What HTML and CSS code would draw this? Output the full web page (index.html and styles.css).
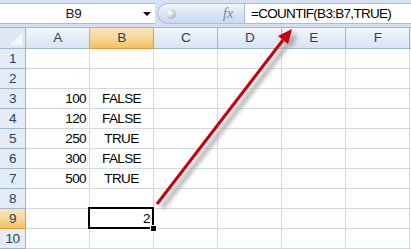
FILE: index.html
```html
<!DOCTYPE html>
<html lang="en">
<head>
  <meta charset="UTF-8">
  <title>COUNTIF</title>
  <link rel="stylesheet" href="styles.css">
</head>
<body>

  <div class="formula-bar">
    <div class="name-box">
      <span class="name">B9</span>
      <span class="drop"></span>
    </div>
    <div class="grip">
      <span class="ball"></span>
      <span class="fx">fx</span>
    </div>
    <div class="formula">=COUNTIF(B3:B7,TRUE)</div>
  </div>

  <div class="sheet" id="sheet"></div>

  <!-- arrow pointing at the formula -->
  <svg class="arrow" width="411" height="249" viewBox="0 0 411 249">
    <defs>
      <filter id="soft" x="-20%" y="-20%" width="140%" height="140%">
        <feGaussianBlur stdDeviation="2"/>
      </filter>
    </defs>
    <g class="shadow" filter="url(#soft)" transform="translate(5 4)">
      <line x1="157" y1="204" x2="283" y2="40"/>
      <polygon points="292,29 288,44 278,36"/>
    </g>
    <g class="red">
      <line x1="157" y1="204" x2="283" y2="40"/>
      <polygon points="292,29 288,44 278,36"/>
    </g>
  </svg>

  <script>
    // columns and data
    let cols = ["A", "B", "C", "D", "E", "F"];
    let data = {
      3: ["100", "FALSE"],
      4: ["120", "FALSE"],
      5: ["250", "TRUE"],
      6: ["300", "FALSE"],
      7: ["500", "TRUE"]
    };

    let html = '<div class="corner"></div>';
    for (let c of cols) {
      html += `<div class="col${c === "B" ? " sel" : ""}">${c}</div>`;
    }
    html += '<div class="col edge"></div>';

    for (let r = 1; r <= 10; r++) {
      html += `<div class="row${r === 9 ? " sel" : ""}">${r}</div>`;
      for (let i = 0; i < cols.length; i++) {
        let text = "";
        let cls = "cell";
        if (data[r] && i === 0) { text = data[r][0]; cls += " num"; }
        if (data[r] && i === 1) { text = data[r][1]; cls += " bool"; }
        if (r === 9 && i === 1) { text = "2"; cls += " num active"; }
        html += `<div class="${cls}">${text}</div>`;
      }
      html += '<div class="cell edge"></div>';
    }
    document.getElementById("sheet").innerHTML = html;
  </script>
</body>
</html>
```

FILE: styles.css
```css
body {
  margin: 0;
  width: 411px;
  height: 249px;
  overflow: hidden;
  background: #fff;
  font-family: "Liberation Sans", Arial, sans-serif;
  position: relative;
}

/* formula bar */
.formula-bar {
  display: flex;
  height: 28px;
  box-sizing: border-box;
  padding-top: 3px;
  padding-bottom: 3px;
  background: #d5e1f2;
  border-bottom: 1px solid #9eb6ce;
}

.name-box {
  flex-shrink: 0;
  width: 155px;
  display: flex;
  align-items: center;
  background: #fff;
  border-top: 1px solid #a7bcd8;
  border-bottom: 1px solid #a7bcd8;
  box-sizing: border-box;
}

.name {
  flex: 1;
  text-align: center;
  font-size: 13.5px;
  letter-spacing: -0.3px;
  color: #1a1a1a;
  padding-left: 4px;
}

.drop {
  width: 0;
  height: 0;
  margin-right: 4px;
  border-left: 4px solid transparent;
  border-right: 4px solid transparent;
  border-top: 4px solid #000;
}

.grip {
  flex-shrink: 0;
  width: 87px;
  display: flex;
  align-items: center;
  border-radius: 11px 0 0 11px;
  margin-left: 2px;
  background: linear-gradient(#f1f6fc, #d9e5f4 50%, #c9d9ee);
  border: 1px solid #a9bfdc;
  border-right: none;
  box-sizing: border-box;
}

.ball {
  width: 10px;
  height: 10px;
  margin-left: 8px;
  border-radius: 50%;
  background: radial-gradient(circle at 35% 35%, #ffffff, #c2c7ce 60%, #9ca4ae);
}

.fx {
  margin-left: 47px;
  font-family: "Liberation Serif", serif;
  font-style: italic;
  font-size: 14px;
  color: #7a8595;
}

.formula {
  flex: 1;
  min-width: 0;
  overflow: hidden;
  white-space: nowrap;
  background: #fff;
  border: 1px solid #a7bcd8;
  border-right: none;
  box-sizing: border-box;
  font-size: 13.5px;
  letter-spacing: -0.7px;
  line-height: 19px;
  padding-left: 6px;
  color: #000;
}

/* sheet grid */
.sheet {
  display: grid;
  grid-template-columns: 26px repeat(6, 64px) 1fr;
  grid-template-rows: 21px repeat(10, 20px);
  font-size: 13.5px;
  letter-spacing: -0.6px;
}

.sheet > div {
  box-sizing: border-box;
  border-right: 1px solid #d0d7e5;
  border-bottom: 1px solid #d0d7e5;
  line-height: 20px;
  white-space: nowrap;
}

.corner {
  background: #dfe8f5;
  border-right: 1px solid #9eb6ce !important;
  border-bottom: 1px solid #9eb6ce !important;
  position: relative;
}

.corner::after {
  content: "";
  position: absolute;
  right: 3px;
  bottom: 3px;
  border-left: 12px solid transparent;
  border-bottom: 12px solid #f4f7fb;
}

.col {
  text-align: center;
  color: #27415f;
  background: linear-gradient(#f3f7fc, #e4ecf7 50%, #dae4f2);
  border-right: 1px solid #9eb6ce !important;
  border-bottom: 1px solid #9eb6ce !important;
}

.row {
  text-align: center;
  color: #27415f;
  background: #e4ecf7;
  border-right: 1px solid #9eb6ce !important;
  border-bottom: 1px solid #9eb6ce !important;
}

.col.sel {
  background: linear-gradient(#fbe3b8, #f8d79b 50%, #f1c15f);
  border-right: 1px solid #f29536 !important;
  border-bottom: 1px solid #f29536 !important;
}

.row.sel {
  background: linear-gradient(#fbe3b8, #f8d79b 50%, #f1c15f);
  border-right: 1px solid #f29536 !important;
  border-bottom: 1px solid #f29536 !important;
}

.edge {
  border-right: none !important;
}

.num {
  text-align: right;
  padding-right: 3px;
}

.bool {
  text-align: center;
}

.active {
  position: relative;
}

.active::after {
  content: "";
  position: absolute;
  top: -2px;
  left: -2px;
  right: -1px;
  bottom: -1px;
  border: 2px solid #000;
}

.active::before {
  content: "";
  position: absolute;
  right: -4px;
  bottom: -4px;
  width: 5px;
  height: 5px;
  background: #000;
  border: 1px solid #fff;
  z-index: 1;
}

/* arrow overlay */
.arrow {
  position: absolute;
  left: 0;
  top: 0;
  pointer-events: none;
}

.arrow line {
  stroke-width: 3;
}

.red line {
  stroke: #c8000a;
}

.red polygon {
  fill: #c8000a;
}

.shadow line {
  stroke-width: 4;
  stroke: #a8a8a8;
}

.shadow polygon {
  fill: #a8a8a8;
}
```
